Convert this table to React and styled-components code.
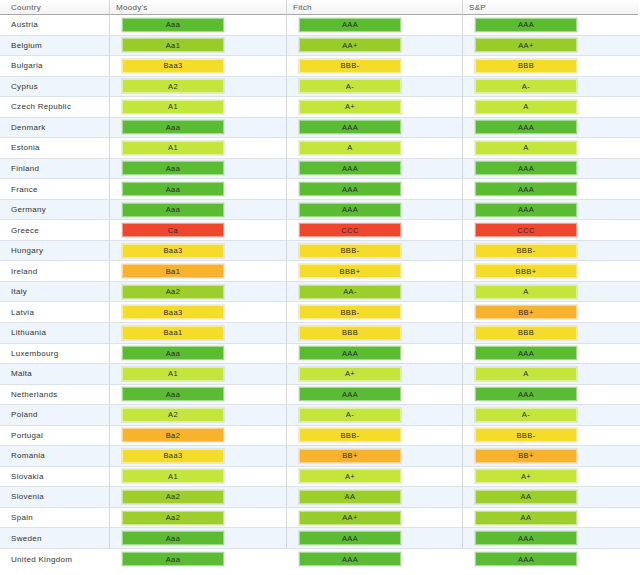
import React from "react";
import styled, { createGlobalStyle } from "styled-components";

const Global = createGlobalStyle`
  html, body { margin: 0; padding: 0; background: #ffffff; }
  body { font-family: "Liberation Sans", Arial, sans-serif; }
`;

const ROW_H = 20.54;

const Table = styled.div`
  width: 640px;
  display: grid;
  grid-template-columns: 110px 177px 176px 177px;
  font-family: "Liberation Sans", Arial, sans-serif;
  font-size: 8px;
  color: #333;
  letter-spacing: 0.3px;
`;

const HeadCell = styled.div`
  height: 15px;
  box-sizing: border-box;
  padding: 3px 0 0 ${(p) => (p.$first ? 11 : 6)}px;
  background: linear-gradient(#ffffff, #f3f3f3);
  border-bottom: 1px solid #a9a9a9;
  border-right: ${(p) => (p.$last ? "none" : "1px solid #d6d6d6")};
  color: #555;
  line-height: 10px;
  box-shadow: 0 1px 1px rgba(0, 0, 0, 0.08);
  margin-right: ${(p) => (p.$last ? "2px" : "0")};
`;

const Cell = styled.div`
  height: ${ROW_H}px;
  box-sizing: border-box;
  display: flex;
  align-items: center;
  background: ${(p) => (p.$alt ? "#eef5fc" : "#ffffff")};
  border-bottom: ${(p) => (p.$end ? "none" : "1px solid #dbe2ea")};
  border-right: ${(p) => (p.$last || p.$end ? "none" : "1px solid #d3d6da")};
`;

const CountryCell = styled(Cell)`
  padding-left: 11px;
  color: #333;
`;

const RatingCell = styled(Cell)`
  padding-left: 12px;
`;

const Bar = styled.div`
  width: 102px;
  height: 14px;
  box-sizing: border-box;
  background: ${(p) => p.$color};
  border: 1px solid rgba(255, 255, 255, 0.45);
  outline: 1px solid rgba(200, 200, 200, 0.35);
  display: flex;
  align-items: center;
  justify-content: center;
  font-size: 7.5px;
  color: #2a2a2a;
  letter-spacing: 0.4px;
`;

const TIERS = {
  Aaa: "#5bbb33", AAA: "#5bbb33",
  Aa1: "#97cc2a", Aa2: "#9ccf2c", "AA+": "#97cc2a", AA: "#9ccf2c", "AA-": "#9ccf2c",
  A1: "#c4e63c", A2: "#c4e63c", "A+": "#c4e63c", A: "#c4e63c", "A-": "#c4e63c",
  Baa1: "#f5dc2a", Baa3: "#f5dc2a", "BBB+": "#f5dc2a", BBB: "#f5dc2a", "BBB-": "#f5dc2a",
  Ba1: "#f7b22e", Ba2: "#f7b22e", "BB+": "#f7b22e",
  Ca: "#ef472f", CCC: "#ef472f",
};

const DATA = [
  ["Austria", "Aaa", "AAA", "AAA"],
  ["Belgium", "Aa1", "AA+", "AA+"],
  ["Bulgaria", "Baa3", "BBB-", "BBB"],
  ["Cyprus", "A2", "A-", "A-"],
  ["Czech Republic", "A1", "A+", "A"],
  ["Denmark", "Aaa", "AAA", "AAA"],
  ["Estonia", "A1", "A", "A"],
  ["Finland", "Aaa", "AAA", "AAA"],
  ["France", "Aaa", "AAA", "AAA"],
  ["Germany", "Aaa", "AAA", "AAA"],
  ["Greece", "Ca", "CCC", "CCC"],
  ["Hungary", "Baa3", "BBB-", "BBB-"],
  ["Ireland", "Ba1", "BBB+", "BBB+"],
  ["Italy", "Aa2", "AA-", "A"],
  ["Latvia", "Baa3", "BBB-", "BB+"],
  ["Lithuania", "Baa1", "BBB", "BBB"],
  ["Luxembourg", "Aaa", "AAA", "AAA"],
  ["Malta", "A1", "A+", "A"],
  ["Netherlands", "Aaa", "AAA", "AAA"],
  ["Poland", "A2", "A-", "A-"],
  ["Portugal", "Ba2", "BBB-", "BBB-"],
  ["Romania", "Baa3", "BB+", "BB+"],
  ["Slovakia", "A1", "A+", "A+"],
  ["Slovenia", "Aa2", "AA", "AA"],
  ["Spain", "Aa2", "AA+", "AA"],
  ["Sweden", "Aaa", "AAA", "AAA"],
  ["United Kingdom", "Aaa", "AAA", "AAA"],
];

export default function App() {
  return (
    <>
      <Global />
      <Table>
        <HeadCell $first>Country</HeadCell>
        <HeadCell>Moody's</HeadCell>
        <HeadCell>Fitch</HeadCell>
        <HeadCell $last>S&amp;P</HeadCell>
        {DATA.map(([country, ...ratings], i) => {
          const alt = i % 2 === 1;
          const end = i === DATA.length - 1;
          return (
            <React.Fragment key={country}>
              <CountryCell $alt={alt} $end={end}>{country}</CountryCell>
              {ratings.map((r, j) => (
                <RatingCell key={j} $alt={alt} $end={end} $last={j === 2}>
                  <Bar $color={TIERS[r]}>{r}</Bar>
                </RatingCell>
              ))}
            </React.Fragment>
          );
        })}
      </Table>
    </>
  );
}
